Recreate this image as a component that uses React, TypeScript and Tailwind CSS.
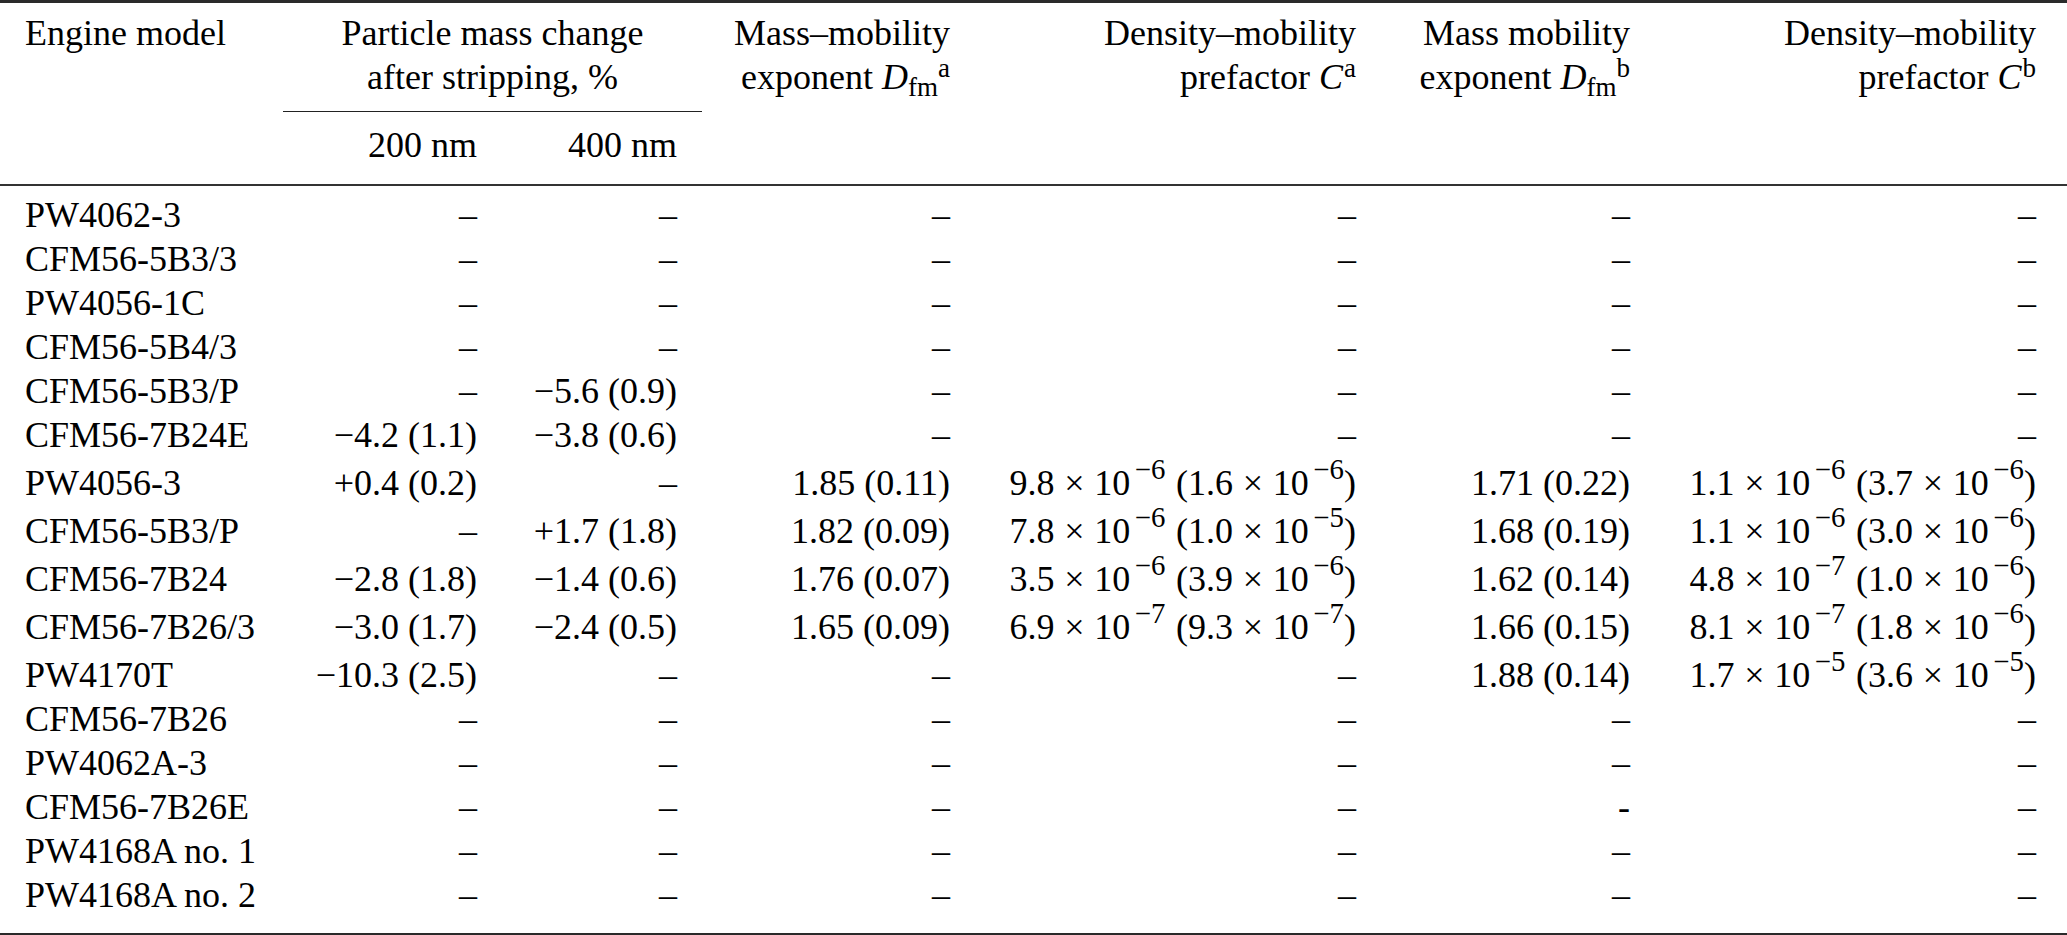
import React from "react";

type Cell = React.ReactNode;

const cols = "grid grid-cols-[283px_194px_200px_273px_406px_274px_406px]";

function Exp({ e }: { e: string }) {
  return (
    <sup className="text-[0.8em] -top-[0.55em]">
      <span className="inline-block w-[0.72em]">−</span>
      {e}
    </sup>
  );
}

function Sci({ a, e, b, f }: { a: string; e: string; b: string; f: string }) {
  return (
    <span>
      {a}
      <span className="mx-[0.27em]">×</span>10
      <Exp e={e} />
      <span className="ml-[0.3em]">(</span>
      {b}
      <span className="mx-[0.27em]">×</span>10
      <Exp e={f} />)
    </span>
  );
}

const D = "–";

const rows: { name: string; tall?: boolean; cells: Cell[] }[] = [
  { name: "PW4062-3", cells: [D, D, D, D, D, D] },
  { name: "CFM56-5B3/3", cells: [D, D, D, D, D, D] },
  { name: "PW4056-1C", cells: [D, D, D, D, D, D] },
  { name: "CFM56-5B4/3", cells: [D, D, D, D, D, D] },
  { name: "CFM56-5B3/P", cells: [D, "−5.6 (0.9)", D, D, D, D] },
  { name: "CFM56-7B24E", cells: ["−4.2 (1.1)", "−3.8 (0.6)", D, D, D, D] },
  {
    name: "PW4056-3",
    tall: true,
    cells: [
      "+0.4 (0.2)",
      D,
      "1.85 (0.11)",
      <Sci a="9.8" e="6" b="1.6" f="6" />,
      "1.71 (0.22)",
      <Sci a="1.1" e="6" b="3.7" f="6" />,
    ],
  },
  {
    name: "CFM56-5B3/P",
    tall: true,
    cells: [
      D,
      "+1.7 (1.8)",
      "1.82 (0.09)",
      <Sci a="7.8" e="6" b="1.0" f="5" />,
      "1.68 (0.19)",
      <Sci a="1.1" e="6" b="3.0" f="6" />,
    ],
  },
  {
    name: "CFM56-7B24",
    tall: true,
    cells: [
      "−2.8 (1.8)",
      "−1.4 (0.6)",
      "1.76 (0.07)",
      <Sci a="3.5" e="6" b="3.9" f="6" />,
      "1.62 (0.14)",
      <Sci a="4.8" e="7" b="1.0" f="6" />,
    ],
  },
  {
    name: "CFM56-7B26/3",
    tall: true,
    cells: [
      "−3.0 (1.7)",
      "−2.4 (0.5)",
      "1.65 (0.09)",
      <Sci a="6.9" e="7" b="9.3" f="7" />,
      "1.66 (0.15)",
      <Sci a="8.1" e="7" b="1.8" f="6" />,
    ],
  },
  {
    name: "PW4170T",
    tall: true,
    cells: [
      "−10.3 (2.5)",
      D,
      D,
      D,
      "1.88 (0.14)",
      <Sci a="1.7" e="5" b="3.6" f="5" />,
    ],
  },
  { name: "CFM56-7B26", cells: [D, D, D, D, D, D] },
  { name: "PW4062A-3", cells: [D, D, D, D, D, D] },
  { name: "CFM56-7B26E", cells: [D, D, D, D, "-", D] },
  { name: "PW4168A no. 1", cells: [D, D, D, D, D, D] },
  { name: "PW4168A no. 2", cells: [D, D, D, D, D, D] },
];

function Dfm({ s }: { s: string }) {
  return (
    <span>
      <i>D</i>
      <sub>fm</sub>
      <sup className="text-[0.75em] -top-[0.45em]">{s}</sup>
    </span>
  );
}

export default function App() {
  return (
    <div
      className="w-[2067px] h-[935px] bg-white text-black text-[36px] leading-[44px] overflow-hidden"
      style={{ fontFamily: '"Liberation Serif", "Times New Roman", serif' }}
    >
      <div className="h-[3px] bg-[#2a2a2a]" />

      {/* header */}
      <div className={`${cols} pt-[8px] pb-[17px]`}>
        <div className="pl-[25px]">Engine model</div>
        <div className="col-span-2">
          <div className="-mr-[25px] text-center">
            <div>Particle mass change</div>
            <div>after stripping, %</div>
          </div>
          <div className="-mr-[25px] mt-[12px] mb-[11px] h-px bg-[#222]" />
          <div className="grid grid-cols-[194px_200px] text-right">
            <div>200 nm</div>
            <div>400 nm</div>
          </div>
        </div>
        <div className="text-right">
          <div>Mass–mobility</div>
          <div>
            exponent <Dfm s="a" />
          </div>
        </div>
        <div className="text-right">
          <div>Density–mobility</div>
          <div>
            prefactor <i>C</i>
            <sup className="text-[0.75em] -top-[0.45em] ml-[1px]">a</sup>
          </div>
        </div>
        <div className="text-right">
          <div>Mass mobility</div>
          <div>
            exponent <Dfm s="b" />
          </div>
        </div>
        <div className="text-right">
          <div>Density–mobility</div>
          <div>
            prefactor <i>C</i>
            <sup className="text-[0.75em] -top-[0.45em] ml-[1px]">b</sup>
          </div>
        </div>
      </div>
      <div className="h-[2px] bg-[#333]" />

      {/* body */}
      <div className="pt-[7px] pb-[16px]">
        {rows.map((r, i) => (
          <div key={i} className={`${cols} ${r.tall ? "h-[48px] pt-[4px]" : "h-[44px]"}`}>
            <div className="pl-[25px] whitespace-nowrap">{r.name}</div>
            {r.cells.map((c, j) => (
              <div key={j} className="text-right whitespace-nowrap">
                {c}
              </div>
            ))}
          </div>
        ))}
      </div>
      <div className="h-[2px] bg-[#2a2a2a]" />
    </div>
  );
}
